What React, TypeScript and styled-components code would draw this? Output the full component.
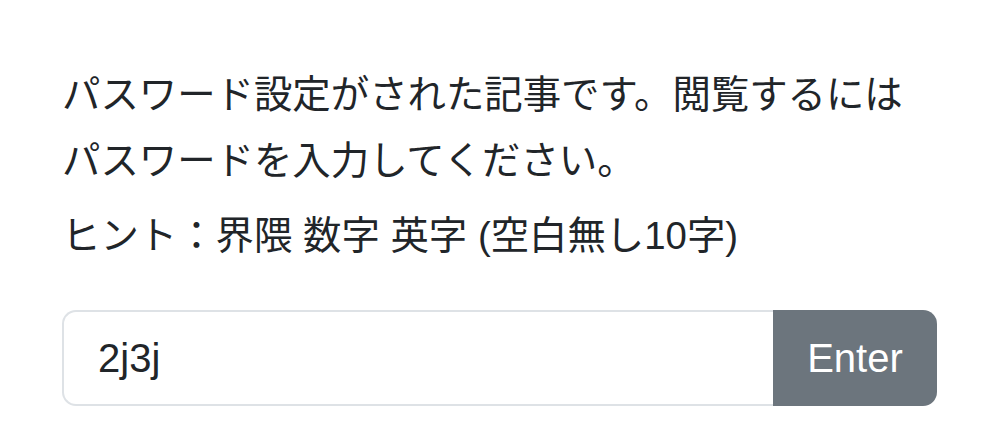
import React, { useState } from 'react';
import styled, { createGlobalStyle } from 'styled-components';

const GlobalStyle = createGlobalStyle`
  html, body {
    margin: 0;
    padding: 0;
    background: #ffffff;
  }
  body {
    font-family: "Liberation Sans", "Noto Sans CJK JP", sans-serif;
    color: #212529;
  }
`;

const Page = styled.div`
  width: 999px;
  height: 448px;
  box-sizing: border-box;
  padding: 62px 62px 0 62px;
`;

const Message = styled.p`
  margin: 0;
  font-size: 38.4px;
  line-height: 66px;
`;

const Hint = styled.p`
  margin: 9px 0 0 0;
  font-size: 38.4px;
  line-height: 66px;
`;

const InputGroup = styled.form`
  display: flex;
  margin-top: 41px;
  height: 96px;
`;

const PasswordInput = styled.input`
  flex: 1;
  min-width: 0;
  box-sizing: border-box;
  height: 100%;
  border: 2.5px solid #dee2e6;
  border-right: none;
  border-radius: 14px 0 0 14px;
  padding: 0 34px;
  font-family: "Liberation Sans", Arial, sans-serif;
  font-size: 40px;
  color: #212529;
  background: #fff;
  outline: none;
`;

const EnterButton = styled.button`
  width: 164px;
  height: 100%;
  border: none;
  border-radius: 0 14px 14px 0;
  background: #6c757d;
  color: #ffffff;
  font-family: "Liberation Sans", Arial, sans-serif;
  font-size: 40px;
  padding: 0;
  cursor: pointer;
`;

export default function App() {
  const [value, setValue] = useState('2j3j');

  return (
    <>
      <GlobalStyle />
      <Page>
        <Message>
          パスワード設定がされた記事です。閲覧するには
          <br />
          パスワードを入力してください。
        </Message>
        <Hint>ヒント：界隈 数字 英字 (空白無し10字)</Hint>
        <InputGroup onSubmit={(e) => e.preventDefault()}>
          <PasswordInput value={value} onChange={(e) => setValue(e.target.value)} />
          <EnterButton type="submit">Enter</EnterButton>
        </InputGroup>
      </Page>
    </>
  );
}
